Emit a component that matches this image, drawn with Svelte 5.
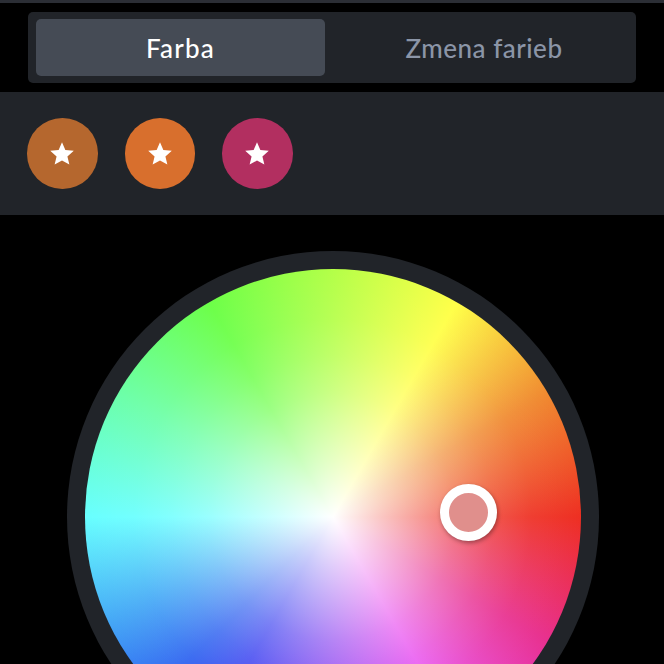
<script>
let tab = $state("Farba")
let tabs = ["Farba", "Zmena farieb"]
let favourites = ["#b5672e", "#d86f2d", "#b22f60"]
</script>

<div class="page">
  <div class="topline"></div>

  <div class="tabs">
    {#each tabs as t}
      <button class="tab" class:active={tab === t} onclick={() => (tab = t)}>{t}</button>
    {/each}
  </div>

  <div class="favs">
    {#each favourites as c}
      <button class="fav" style="background:{c}" aria-label="favourite">
        <svg viewBox="0 0 24 24" width="26" height="26">
          <path d="M12 1.2l3.1 7.2 7.8.7-5.9 5.1 1.8 7.6L12 18l-6.8 3.8 1.8-7.6-5.9-5.1 7.8-.7z" fill="#fff" />
        </svg>
      </button>
    {/each}
  </div>

  <div class="wheel_wrap">
    <div class="wheel_ring">
      <div class="wheel">
        <div class="handle"></div>
      </div>
    </div>
  </div>
</div>

<style>
  :global(body) {
    background: #000;
  }

  .page {
    height: 664px;
    overflow: hidden;
    background: #000;
    font-family: Lato, "Open Sans", sans-serif;
  }

  .topline {
    height: 3px;
    background: #2b2e35;
  }

  .tabs {
    display: grid;
    grid-template-columns: 289px 1fr;
    margin: 9px 28px 0;
    padding: 7px 0 7px 8px;
    height: 71px;
    box-sizing: border-box;
    background: #212429;
    border-radius: 5px;
  }

  .tab {
    border: 0;
    border-radius: 5px;
    background: transparent;
    color: #8b95a7;
    font-family: inherit;
    font-size: 26px;
    font-weight: 500;
    letter-spacing: 0.5px;
    padding: 0 0 0 7px;
  }

  .tab.active {
    background: #454b55;
    color: #fff;
    padding: 0;
    letter-spacing: 1.2px;
  }

  .favs {
    display: flex;
    gap: 27px;
    align-items: center;
    margin-top: 9px;
    height: 123px;
    padding-left: 27px;
    background: #212429;
  }

  .fav {
    display: flex;
    align-items: center;
    justify-content: center;
    width: 70.5px;
    height: 70.5px;
    border: 0;
    border-radius: 50%;
    padding: 0;
  }

  .wheel_wrap {
    display: flex;
    justify-content: center;
    padding: 36px 0 0 1px;
  }

  .wheel_ring {
    flex: none;
    width: 532px;
    height: 532px;
    padding: 18px;
    box-sizing: border-box;
    border-radius: 50%;
    background: #212429;
  }

  .wheel {
    position: relative;
    width: 100%;
    height: 100%;
    border-radius: 50%;
    background:
      radial-gradient(circle closest-side, #fff 0%, rgba(255, 255, 255, 0.72) 20%, rgba(255, 255, 255, 0.33) 50%, rgba(255, 255, 255, 0.18) 65%, rgba(255, 255, 255, 0.07) 80%, rgba(255, 255, 255, 0) 100%),
      conic-gradient(from 90deg, #ee2f22, #e8308f 30deg, #e850f0 60deg, #3a40f0 120deg, #2f62f0 135deg, #45a8f6 155deg, #68ffff 180deg, #6cffa8 210deg, #6cff48 240deg, #b4ff48 270deg, #ffff48 300deg, #f08a30 330deg, #ee2f22);
  }

  .handle {
    position: absolute;
    left: 355px;
    top: 215px;
    width: 57px;
    height: 57px;
    box-sizing: border-box;
    border: 9px solid #fff;
    border-radius: 50%;
    background: #e08f8c;
    box-shadow: 1px 2px 4px rgba(0, 0, 0, 0.35);
  }
</style>
